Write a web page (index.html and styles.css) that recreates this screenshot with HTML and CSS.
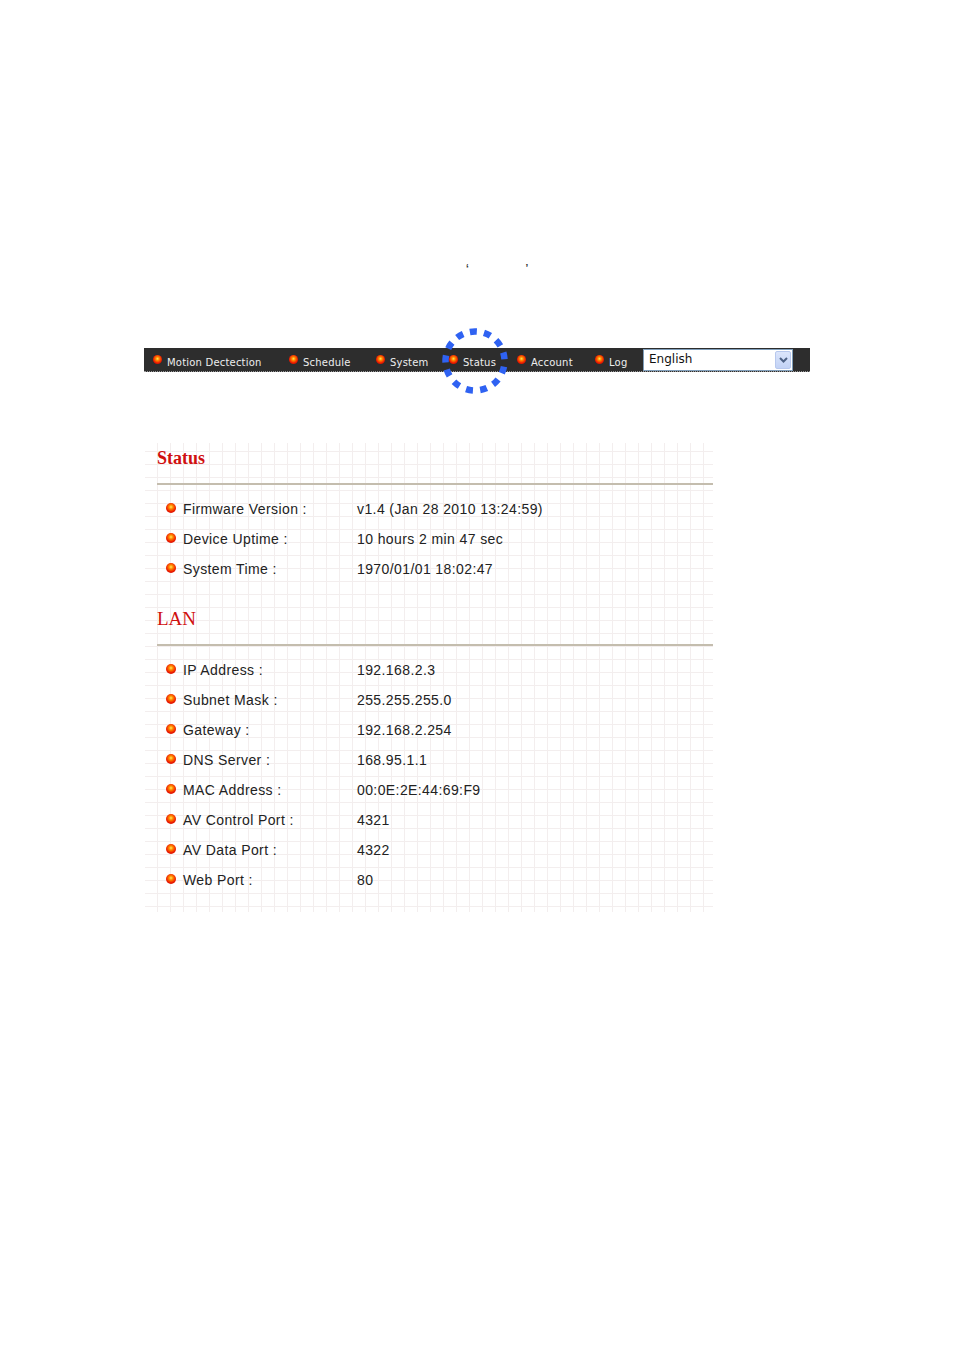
FILE: index.html
```html
<!DOCTYPE html>
<html lang="en">
<head>
  <meta charset="UTF-8">
  <title>Status</title>
  <link rel="stylesheet" href="styles.css">
</head>
<body>

  <div class="marks">
    <span class="mark-left">&#8216;</span>
    <span class="mark-right">&#8217;</span>
  </div>

  <div class="navbar">
    <a href="#" class="nav-item w-motion"><span class="dot"></span>Motion Dectection</a>
    <a href="#" class="nav-item w-schedule"><span class="dot"></span>Schedule</a>
    <a href="#" class="nav-item w-system"><span class="dot"></span>System</a>
    <a href="#" class="nav-item w-status"><span class="dot"></span>Status</a>
    <a href="#" class="nav-item w-account"><span class="dot"></span>Account</a>
    <a href="#" class="nav-item w-log"><span class="dot"></span>Log</a>
    <div class="lang-select">
      <span class="lang-text">English</span>
      <span class="lang-btn">
        <svg width="9" height="6" viewBox="0 0 9 6"><path d="M1 1 L4.5 4.5 L8 1" fill="none" stroke="#4d6185" stroke-width="2"/></svg>
      </span>
    </div>

    <!-- marcador em volta do Status -->
    <svg class="highlight" width="72" height="72" viewBox="0 0 72 72">
      <circle cx="36" cy="36" r="29.5" fill="none" stroke="#2f62f2" stroke-width="6.5" stroke-dasharray="7 7.25" transform="rotate(-100 36 36)"/>
    </svg>
  </div>

  <div class="panel">
    <h2 class="section-title title-status">Status</h2>
    <div class="rows">
      <div class="row"><span class="label"><span class="bullet"></span>Firmware Version :</span><span class="value">v1.4 (Jan 28 2010 13:24:59)</span></div>
      <div class="row"><span class="label"><span class="bullet"></span>Device Uptime :</span><span class="value">10 hours 2 min 47 sec</span></div>
      <div class="row"><span class="label"><span class="bullet"></span>System Time :</span><span class="value">1970/01/01 18:02:47</span></div>
    </div>

    <h2 class="section-title title-lan">LAN</h2>
    <div class="rows">
      <div class="row"><span class="label"><span class="bullet"></span>IP Address :</span><span class="value">192.168.2.3</span></div>
      <div class="row"><span class="label"><span class="bullet"></span>Subnet Mask :</span><span class="value">255.255.255.0</span></div>
      <div class="row"><span class="label"><span class="bullet"></span>Gateway :</span><span class="value">192.168.2.254</span></div>
      <div class="row"><span class="label"><span class="bullet"></span>DNS Server :</span><span class="value">168.95.1.1</span></div>
      <div class="row"><span class="label"><span class="bullet"></span>MAC Address :</span><span class="value">00:0E:2E:44:69:F9</span></div>
      <div class="row"><span class="label"><span class="bullet"></span>AV Control Port :</span><span class="value">4321</span></div>
      <div class="row"><span class="label"><span class="bullet"></span>AV Data Port :</span><span class="value">4322</span></div>
      <div class="row"><span class="label"><span class="bullet"></span>Web Port :</span><span class="value">80</span></div>
    </div>
  </div>

</body>
</html>
```

FILE: styles.css
```css
* {
  box-sizing: border-box;
}
body, html {
  margin: 0;
  padding: 0;
  background: #fff;
  font-family: "Liberation Sans", Arial, sans-serif;
}

.marks {
  padding-top: 264px;
  height: 274px;
  font-family: "Liberation Sans", sans-serif;
  font-size: 10px;
  line-height: 10px;
  color: #333;
  font-weight: bold;
}
.mark-left {
  margin-left: 466px;
}
.mark-right {
  margin-left: 54px;
}

.navbar {
  position: relative;
  margin: 74px 0 0 144px;
  width: 666px;
  height: 24px;
  background-color: #2d2d2d;
  border-bottom: 1px dotted #9a9a9a;
  display: flex;
  align-items: center;
  padding-left: 9px;
}

.nav-item {
  display: flex;
  align-items: center;
  gap: 5px;
  color: #eeeeee;
  text-decoration: none;
  font-family: "DejaVu Sans", Verdana, sans-serif;
  font-size: 10px;
  letter-spacing: 0.2px;
  padding-top: 5px;
  white-space: nowrap;
}
.w-motion { width: 136px; }
.w-schedule { width: 87px; }
.w-system { width: 73px; }
.w-status { width: 68px; }
.w-account { width: 78px; }
.w-log { width: 48px; }

.dot {
  width: 9px;
  height: 9px;
  border-radius: 50%;
  margin-top: -5px;
  background: radial-gradient(circle at 50% 42%, #ffe95a 0, #ff8a00 25%, #ee1c00 60%, #b00000 100%);
}

.lang-select {
  width: 150px;
  height: 22px;
  background: #fff;
  border: 1px solid #7f9db9;
  display: flex;
  align-items: center;
  justify-content: space-between;
  padding: 0 1px 0 5px;
}
.lang-text {
  font-family: "DejaVu Sans", Verdana, sans-serif;
  font-size: 12px;
  color: #111;
  margin-top: -1px;
}
.lang-btn {
  width: 16px;
  height: 18px;
  background: linear-gradient(#dbe5fb, #c2d2f5);
  border: 1px solid #b7c8ee;
  border-radius: 2px;
  display: flex;
  align-items: center;
  justify-content: center;
}

.highlight {
  position: absolute;
  left: 295px;
  top: -23px;
}

.panel {
  margin: 71px 0 0 145px;
  width: 568px;
  padding-top: 1px;
  padding-bottom: 17px;
  background-color: #fff;
  background-image:
    linear-gradient(to right, #f3eeee 1px, transparent 1px),
    linear-gradient(to bottom, #f3eeee 1px, transparent 1px);
  background-size: 13px 13px;
  background-position: 12px 8px;
}

.section-title {
  margin: 0 0 9px 12px;
  height: 41px;
  border-bottom: 2px solid #c4bdae;
  font-family: "Liberation Serif", "Times New Roman", serif;
  color: #d01010;
  line-height: 20px;
}
.title-status {
  padding-top: 4px;
  font-size: 18px;
  font-weight: bold;
}
.title-lan {
  margin-top: 21px;
  padding-top: 4px;
  font-size: 19px;
  font-weight: normal;
}

.row {
  display: flex;
  align-items: center;
  height: 30px;
  padding-left: 21px;
  font-size: 14px;
  letter-spacing: 0.4px;
  color: #222;
}
.label {
  display: flex;
  align-items: center;
  gap: 7px;
  width: 191px;
}
.bullet {
  width: 10px;
  height: 10px;
  border-radius: 50%;
  margin-top: -2px;
  background: radial-gradient(circle at 50% 40%, #ffe95a 0, #ff8a00 25%, #ee1c00 60%, #b00000 100%);
}
```
